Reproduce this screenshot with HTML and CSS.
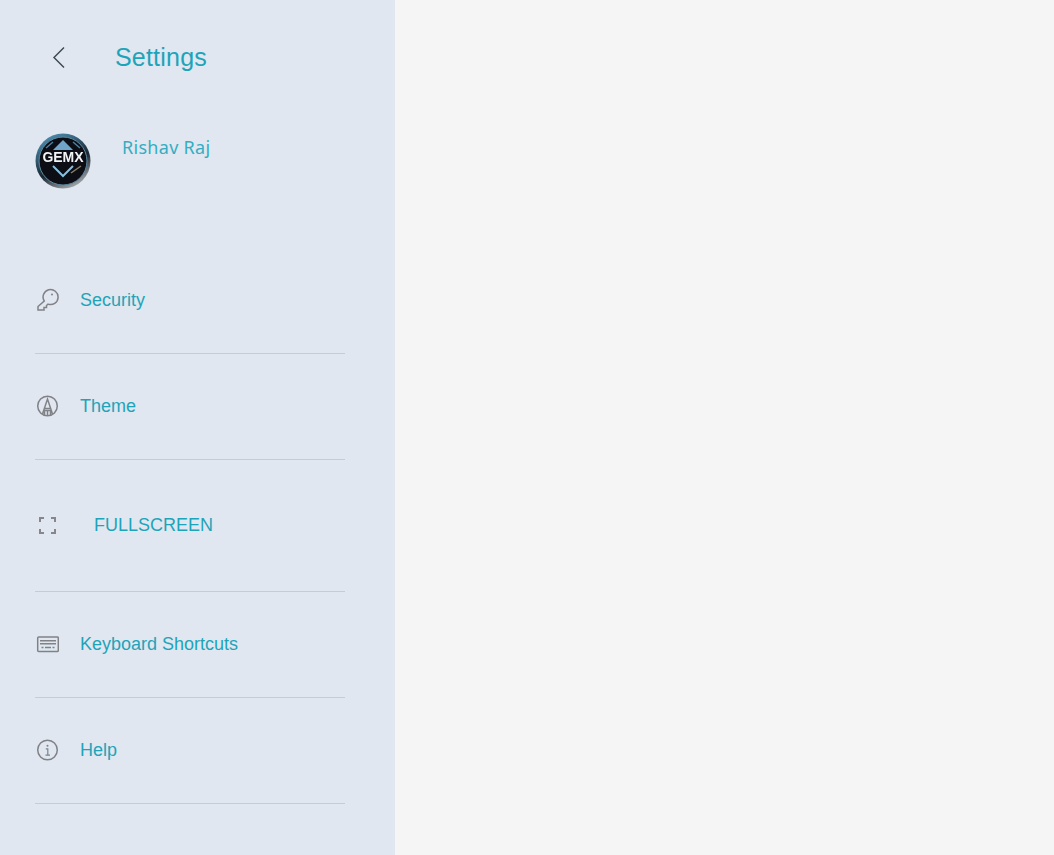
FILE: index.html
```html
<!DOCTYPE html>
<html lang="en">

<head>
    <meta charset="UTF-8">
    <meta name="viewport" content="width=device-width, initial-scale=1.0">
    <title>Settings</title>
    <link rel="stylesheet" href="styles.css">
</head>

<body>
    <aside class="sidebar">
        <header class="top">
            <button class="back" aria-label="Back">
                <svg width="16" height="24" viewBox="0 0 16 24" fill="none" stroke="#3f4a52" stroke-width="1.5">
                    <path d="M15 1.500 5 11.500l10 10" />
                </svg>
            </button>
            <h1 class="title">Settings</h1>
        </header>

        <div class="profile">
            <svg class="avatar" width="56" height="56" viewBox="0 0 56 56">
                <defs>
                    <linearGradient id="ring" x1="0.2" y1="0" x2="0.7" y2="1">
                        <stop offset="0" stop-color="#4f94b8" />
                        <stop offset="0.6" stop-color="#1a2630" />
                        <stop offset="1" stop-color="#a9adb0" />
                    </linearGradient>
                    <filter id="soft">
                        <feGaussianBlur stdDeviation="0.35" />
                    </filter>
                </defs>
                <g filter="url(#soft)">
                    <circle cx="28" cy="28" r="27.500" fill="url(#ring)" />
                    <circle cx="28" cy="28" r="24" fill="#0b0e13" stroke="#5f8aa3" stroke-width="1" />
                    <path d="M28 7 38 17H18z" fill="#6fa5c9" />
                    <path d="M11 15 18 9M45 15 38 9" stroke="#4c7f9f" stroke-width="1.500" />
                    <path d="M18 33 28 43 38 33" fill="none" stroke="#86bfe0" stroke-width="2" />
                    <path d="M36 40 46 33" stroke="#8d8068" stroke-width="1.500" />
                    <text class="avatar-text" x="28" y="29">GEMX</text>
                </g>
            </svg>
            <span class="name">Rishav Raj</span>
        </div>

        <ul class="menu">
            <li class="item">
                <svg class="icon" width="24" height="24" viewBox="0 0 24 24" fill="none" stroke="#808285" stroke-width="1.500">
                    <path d="M9.200 13A7.500 7.500 0 1 1 13 16.100l-1.500 1.400v2H9V22H3v-3.500z" />
                    <circle cx="17" cy="6.500" r="1" fill="#808285" stroke="none" />
                </svg>
                <span class="label">Security</span>
            </li>
            <li class="item">
                <svg class="icon" width="24" height="24" viewBox="0 0 24 24" fill="none" stroke="#808285" stroke-width="1.500">
                    <circle cx="12.500" cy="12" r="9.800" />
                    <path d="M7.500 20 12.500 5l5 15M9.300 14.500h6.400M8.500 16.500h8M9.500 16.500v5M15.500 16.500v5M12.500 16.500v5" />
                </svg>
                <span class="label">Theme</span>
            </li>
            <li class="item item-tall">
                <svg class="icon" width="24" height="24" viewBox="0 0 24 24" fill="none" stroke="#85878a" stroke-width="2">
                    <path d="M5 9V5h4M16 5h4v4M20 16v4h-4M9 20H5v-4" />
                </svg>
                <span class="label label-wide">FULLSCREEN</span>
            </li>
            <li class="item">
                <svg class="icon" width="24" height="24" viewBox="0 0 24 24" fill="none" stroke="#808285" stroke-width="1.500">
                    <rect x="2.700" y="5" width="20.600" height="14.500" rx="1" />
                    <path d="M5 8.700h16M5 11.700h16M6.500 15.500h2M10 15.500h6M17.500 15.500h2" />
                </svg>
                <span class="label">Keyboard Shortcuts</span>
            </li>
            <li class="item">
                <svg class="icon" width="24" height="24" viewBox="0 0 24 24" fill="none" stroke="#808285" stroke-width="1.500">
                    <circle cx="12.500" cy="12" r="9.800" />
                    <path d="M10.800 10.800h2v6.200M10.500 17.200h4.500" stroke-width="1.200" />
                    <circle cx="12.500" cy="7.700" r="1" fill="#808285" stroke="none" />
                </svg>
                <span class="label">Help</span>
            </li>
        </ul>
    </aside>
</body>

</html>
```

FILE: styles.css
```css
/* Global styles */

html,
body {
    height: 100%;
}

body {
    margin: 0;
    font-family: "Liberation Sans", Arial, sans-serif;
    background-color: #f5f5f6;
    overflow: hidden;
}
/* Sidebar */

.sidebar {
    width: 395px;
    height: 100%;
    box-sizing: border-box;
    padding: 0 50px 0 35px;
    background-color: #e0e7f1;
    color: #1ea4b8;
}
/* Header */

.top {
    display: flex;
    align-items: center;
    height: 115px;
}

.back {
    display: flex;
    width: 80px;
    padding: 0 0 0 14px;
    border: 0;
    background: none;
}

.title {
    margin: 0;
    font-size: 25px;
    font-weight: 400;
    letter-spacing: 0.2px;
}
/* Profile */

.profile {
    display: flex;
    align-items: flex-start;
    gap: 31px;
    height: 133px;
    padding-top: 18px;
    box-sizing: border-box;
}

.avatar {
    flex: none;
}

.avatar-text {
    font-family: "Liberation Sans", Arial, sans-serif;
    font-size: 14px;
    font-weight: 700;
    fill: #f2f4f6;
    text-anchor: middle;
}

.name {
    font-family: "Noto Sans", sans-serif;
    font-size: 18px;
    line-height: 28px;
    letter-spacing: 0.3px;
    color: #35adc2;
}
/* Menu */

.menu {
    margin: 0;
    padding: 0;
    list-style: none;
}

.item {
    display: flex;
    align-items: center;
    height: 106px;
    box-sizing: border-box;
    border-bottom: 1px solid #c6ccd3;
}

.item-tall {
    height: 132px;
}

.icon {
    flex: none;
    margin-bottom: 2px;
}

.label {
    margin-left: 21px;
    font-size: 18px;
}

.label-wide {
    margin-left: 35px;
}
```
